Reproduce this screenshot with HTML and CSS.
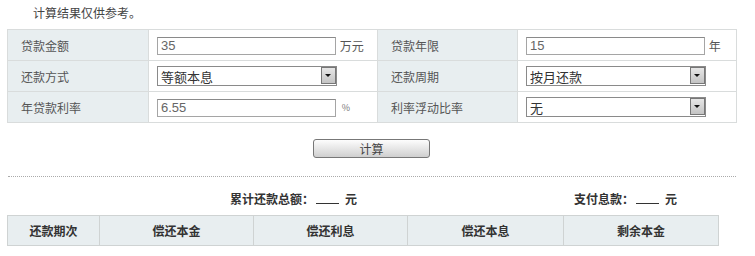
FILE: index.html
```html
<!DOCTYPE html>
<html lang="zh-CN">
<head>
    <meta charset="UTF-8">
    <title>房贷计算器</title>
    <link rel="stylesheet" href="styles.css">
</head>
<body>

    <div class="tip">计算结果仅供参考。</div>

    <!-- 输入表单 -->
    <table class="calc-form">
        <colgroup>
            <col style="width:141px"><col style="width:229px"><col style="width:140px"><col style="width:219px">
        </colgroup>
        <tr>
            <td class="label">贷款金额</td>
            <td><input class="field" type="text" value="35"> <span class="unit">万元</span></td>
            <td class="label">贷款年限</td>
            <td><input class="field" type="text" value="15"> <span class="unit">年</span></td>
        </tr>
        <tr>
            <td class="label">还款方式</td>
            <td>
                <span class="select-wrap">
                    <select class="field-select"><option>等额本息</option><option>等额本金</option></select>
                    <span class="select-btn"></span>
                </span>
            </td>
            <td class="label">还款周期</td>
            <td>
                <span class="select-wrap">
                    <select class="field-select"><option>按月还款</option></select>
                    <span class="select-btn"></span>
                </span>
            </td>
        </tr>
        <tr>
            <td class="label">年贷款利率</td>
            <td><input class="field" type="text" value="6.55"> <span class="unit small">%</span></td>
            <td class="label">利率浮动比率</td>
            <td>
                <span class="select-wrap">
                    <select class="field-select"><option>无</option></select>
                    <span class="select-btn"></span>
                </span>
            </td>
        </tr>
    </table>

    <div class="actions">
        <button class="calc-btn" type="button">计算</button>
    </div>

    <div class="divider"></div>

    <!-- 结果汇总 -->
    <div class="summary">
        <div class="sum-item sum-total">累计还款总额：<span class="blank"></span>元</div>
        <div class="sum-item sum-interest">支付息款：<span class="blank"></span>元</div>
    </div>

    <table class="result">
        <colgroup>
            <col style="width:92px"><col style="width:154px"><col style="width:154px"><col style="width:156px"><col style="width:155px">
        </colgroup>
        <tr>
            <th>还款期次</th>
            <th>偿还本金</th>
            <th>偿还利息</th>
            <th>偿还本息</th>
            <th>剩余本金</th>
        </tr>
    </table>

</body>
</html>
```

FILE: styles.css
```css
/* 基础 */
body {
    margin: 0;
    font-family: "Noto Sans CJK SC", "Liberation Sans", sans-serif;
    font-size: 12px;
    color: #555;
    background: #fff;
}

.tip {
    padding: 5px 0 0 33px;
    height: 24px;
    line-height: 16px;
    color: #444;
}

/* 输入表单 */
.calc-form {
    margin-left: 7px;
    width: 729px;
    border-collapse: collapse;
    table-layout: fixed;
}

.calc-form td {
    height: 30px;
    padding: 0 0 0 8px;
    border: 1px solid #d9dcdc;
    white-space: nowrap;
    vertical-align: middle;
}

.calc-form td.label {
    padding-left: 13px;
    background-color: #e8eef0;
    color: #555;
}

.field {
    box-sizing: border-box;
    width: 179px;
    height: 18px;
    margin: 0;
    padding: 0 3px;
    border: 1px solid #a5a5a5;
    border-top-color: #8a8a8a;
    font-family: "Liberation Sans", Arial, sans-serif;
    font-size: 13px;
    color: #666;
    vertical-align: middle;
}

.unit {
    margin-left: 1px;
    vertical-align: middle;
    color: #555;
}

.unit.small {
    font-size: 9px;
    margin-left: 3px;
    color: #777;
}

/* 下拉框 */
.select-wrap {
    position: relative;
    display: inline-block;
    vertical-align: middle;
}

.field-select {
    box-sizing: border-box;
    display: block;
    width: 180px;
    height: 20px;
    margin: 0;
    padding: 0 20px 0 3px;
    border: 1px solid #8a8a8a;
    border-radius: 0;
    background: #fff;
    -webkit-appearance: none;
    appearance: none;
    font-family: "Noto Sans CJK SC", sans-serif;
    font-size: 13px;
    color: #333;
}

.select-btn {
    position: absolute;
    top: 1px;
    right: 1px;
    width: 15px;
    height: 17px;
    box-sizing: border-box;
    border: 1px solid #777;
    background: linear-gradient(#e6e6e6, #c4c4c4);
    pointer-events: none;
}

.select-btn::after {
    content: "";
    position: absolute;
    left: 3px;
    top: 6px;
    border-left: 3px solid transparent;
    border-right: 3px solid transparent;
    border-top: 3px solid #111;
}

/* 按钮 */
.actions {
    margin: 16px 0 0 7px;
    width: 729px;
    text-align: center;
    line-height: 0;
}

.calc-btn {
    width: 117px;
    height: 19px;
    padding: 0;
    border: 1px solid #777;
    border-radius: 3px;
    background: linear-gradient(#fdfdfd, #e4e4e4 55%, #cfcfcf);
    font-family: "Noto Sans CJK SC", sans-serif;
    font-size: 12px;
    line-height: 17px;
    color: #444;
    cursor: pointer;
}

.divider {
    margin: 18px 0 0 8px;
    width: 728px;
    border-top: 1px dotted #aaa;
}

/* 汇总 */
.summary {
    display: flex;
    margin-left: 7px;
    height: 38px;
    padding-top: 0;
    font-weight: bold;
    color: #333;
    line-height: 16px;
}

.sum-item {
    padding-top: 14px;
    text-align: right;
    white-space: nowrap;
}

.sum-total {
    width: 350px;
}

.sum-interest {
    width: 320px;
}

.blank {
    display: inline-block;
    width: 23px;
    height: 11px;
    margin: 0 6px 0 2px;
    border-bottom: 1px solid #333;
}

/* 结果表 */
.result {
    margin-left: 7px;
    width: 711px;
    border-collapse: collapse;
    table-layout: fixed;
}

.result th {
    height: 29px;
    padding: 0;
    border: 1px solid #cfd3d3;
    background-color: #e8eef0;
    font-size: 12px;
    font-weight: bold;
    color: #333;
    text-align: center;
}
```
